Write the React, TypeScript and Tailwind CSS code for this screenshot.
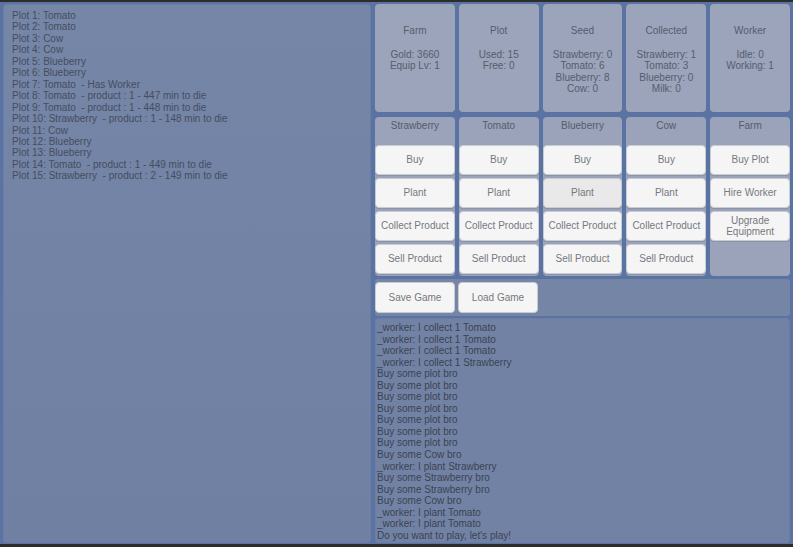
const plots = [
  "Plot 1: Tomato",
  "Plot 2: Tomato",
  "Plot 3: Cow",
  "Plot 4: Cow",
  "Plot 5: Blueberry",
  "Plot 6: Blueberry",
  "Plot 7: Tomato  - Has Worker",
  "Plot 8: Tomato  - product : 1 - 447 min to die",
  "Plot 9: Tomato  - product : 1 - 448 min to die",
  "Plot 10: Strawberry  - product : 1 - 148 min to die",
  "Plot 11: Cow",
  "Plot 12: Blueberry",
  "Plot 13: Blueberry",
  "Plot 14: Tomato  - product : 1 - 449 min to die",
  "Plot 15: Strawberry  - product : 2 - 149 min to die",
];

const logs = [
  "_worker: I collect 1 Tomato",
  "_worker: I collect 1 Tomato",
  "_worker: I collect 1 Tomato",
  "_worker: I collect 1 Strawberry",
  "Buy some plot bro",
  "Buy some plot bro",
  "Buy some plot bro",
  "Buy some plot bro",
  "Buy some plot bro",
  "Buy some plot bro",
  "Buy some plot bro",
  "Buy some Cow bro",
  "_worker: I plant Strawberry",
  "Buy some Strawberry bro",
  "Buy some Strawberry bro",
  "Buy some Cow bro",
  "_worker: I plant Tomato",
  "_worker: I plant Tomato",
  "Do you want to play, let's play!",
];

const stats = [
  { title: "Farm", lines: ["Gold: 3660", "Equip Lv: 1"] },
  { title: "Plot", lines: ["Used: 15", "Free: 0"] },
  { title: "Seed", lines: ["Strawberry: 0", "Tomato: 6", "Blueberry: 8", "Cow: 0"] },
  { title: "Collected", lines: ["Strawberry: 1", "Tomato: 3", "Blueberry: 0", "Milk: 0"] },
  { title: "Worker", lines: ["Idle: 0", "Working: 1"] },
];

const columns = [
  { title: "Strawberry", buttons: ["Buy", "Plant", "Collect Product", "Sell Product"] },
  { title: "Tomato", buttons: ["Buy", "Plant", "Collect Product", "Sell Product"] },
  { title: "Blueberry", buttons: ["Buy", "Plant", "Collect Product", "Sell Product"] },
  { title: "Cow", buttons: ["Buy", "Plant", "Collect Product", "Sell Product"] },
  { title: "Farm", buttons: ["Buy Plot", "Hire Worker", "Upgrade Equipment"] },
];

const GameButton = ({ label, hovered }: { label: string; hovered?: boolean }) => (
  <button
    className={`h-[30px] w-full rounded-[4px] border border-[#c8ccd3] px-1 text-[10px] leading-[11.5px] text-[#75787e] shadow-[0_1px_0_#8b93a6] ${
      hovered ? "bg-[#e9e9e9]" : "bg-[#f5f5f5]"
    }`}
  >
    {label}
  </button>
);

export default function App() {
  return (
    <div
      className="flex h-[547px] w-[793px] flex-col bg-[#5a73a2]"
      style={{ fontFamily: '"Liberation Sans", Arial, sans-serif' }}
    >
      <div className="h-[2px] bg-[#2c2c2c]" />
      <div className="flex flex-1 gap-[4px] px-[3px] pb-[1px] pt-[2px]">
        {/* Plot list */}
        <div className="w-[368px] rounded-[3px] border border-[#6c7ea4] bg-gradient-to-b from-[#7586a7] to-[#6f80a3] pl-[8px] pt-[5px]">
          {plots.map((p, i) => (
            <div key={i} className="whitespace-pre text-[10px] leading-[11.45px] text-[#464d5f]">
              {p}
            </div>
          ))}
        </div>

        {/* Right side */}
        <div className="flex flex-1 flex-col">
          <div className="grid h-[108px] grid-cols-5 gap-[4px]">
            {stats.map((s) => (
              <div
                key={s.title}
                className="rounded-[4px] bg-[#9ba4ba] pt-[21px] text-center text-[10px] leading-[11.6px] text-[#565c6d]"
              >
                <div>{s.title}</div>
                <div className="mt-[12px]">
                  {s.lines.map((l) => (
                    <div key={l}>{l}</div>
                  ))}
                </div>
              </div>
            ))}
          </div>

          <div className="mt-[5px] grid h-[159px] grid-cols-5 gap-[4px]">
            {columns.map((c) => (
              <div key={c.title} className="flex flex-col rounded-[4px] bg-[#9aa3b9]">
                <div className="h-[28px] pt-[3px] text-center text-[10px] leading-[11.5px] text-[#565c6d]">
                  {c.title}
                </div>
                <div className="flex flex-col gap-[3px]">
                  {c.buttons.map((b) => (
                    <GameButton key={b} label={b} hovered={c.title === "Blueberry" && b === "Plant"} />
                  ))}
                </div>
              </div>
            ))}
          </div>

          <div className="mt-[3px] flex h-[37px] gap-[3px] rounded-[3px] bg-[#7585a6] py-[3px]">
            <button className="h-[31px] w-[80px] rounded-[4px] border border-[#c8ccd3] bg-[#f5f5f5] text-[10px] text-[#75787e]">
              Save Game
            </button>
            <button className="h-[31px] w-[80px] rounded-[4px] border border-[#c8ccd3] bg-[#f5f5f5] text-[10px] text-[#75787e]">
              Load Game
            </button>
          </div>

          <div className="mt-[2px] flex-1 rounded-[3px] border border-[#6c7ea4] bg-[#7282a4] pl-[1px] pt-[3px]">
            {logs.map((l, i) => (
              <div key={i} className="text-[10px] leading-[11.55px] text-[#3b4252]">
                {l}
              </div>
            ))}
          </div>
        </div>
      </div>
      <div className="h-[3px] bg-[#2c2c2c]" />
    </div>
  );
}
